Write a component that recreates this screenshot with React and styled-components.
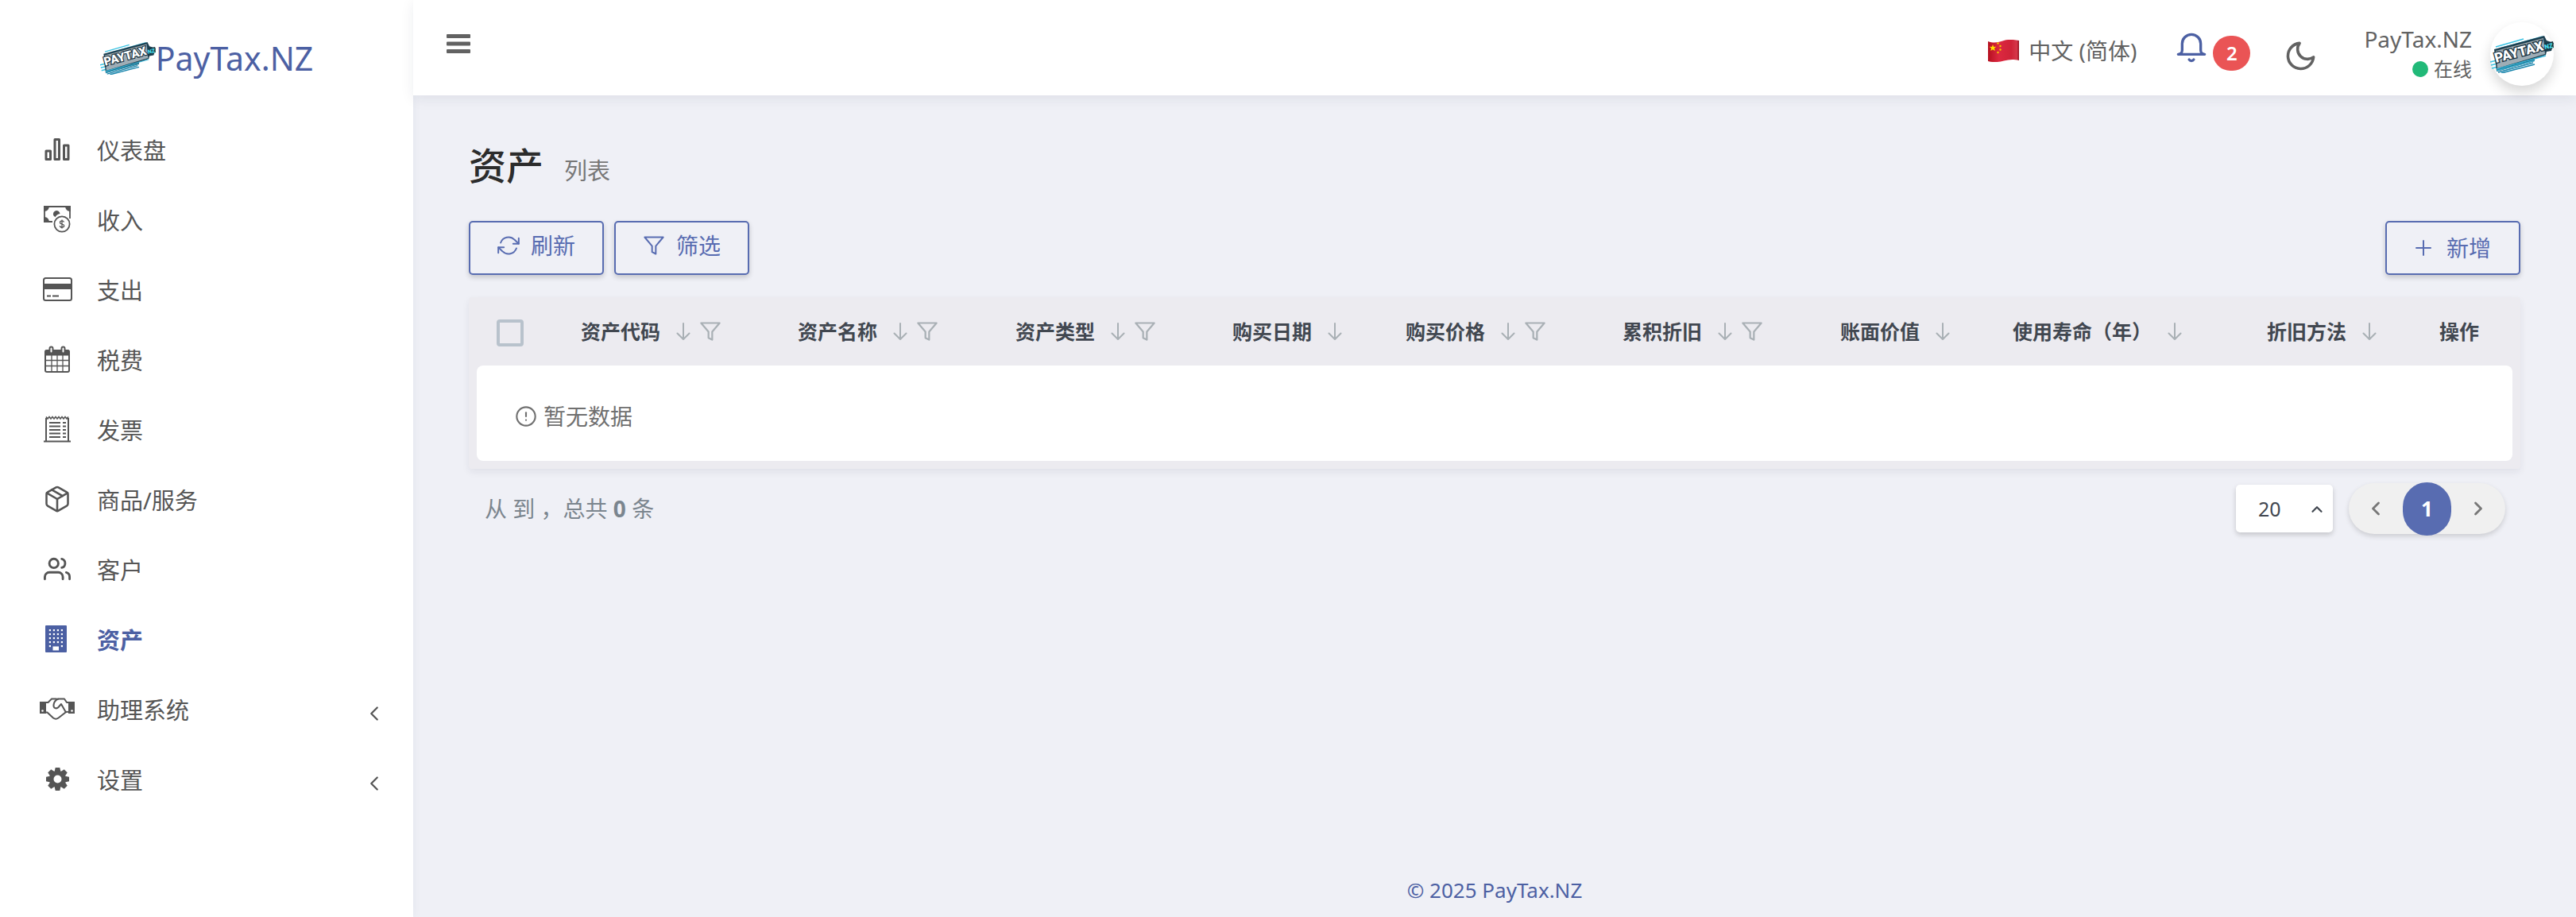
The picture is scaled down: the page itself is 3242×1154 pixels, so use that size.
import React from "react";
import styled, { createGlobalStyle, css } from "styled-components";
import {
  FiAlertCircle,
  FiChevronLeft,
  FiChevronRight,
  FiChevronUp,
  FiFilter,
  FiMoon,
  FiPackage,
  FiRefreshCw,
  FiUsers,
} from "react-icons/fi";

const color = {
  primary: "#586cb1",
  primaryDark: "#4c60a3",
  text: "#555",
  bg: "#eff0f6",
  danger: "#ea5455",
  success: "#21b978",
};

const GlobalStyle = createGlobalStyle`
  *, *::before, *::after { box-sizing: border-box; }
  body {
    margin: 0;
    background: ${color.bg};
    color: ${color.text};
    font-family: "Noto Sans", "Noto Sans CJK SC", sans-serif;
    font-size: 28px;
    line-height: 40px;
  }
  button, select, input { font: inherit; color: inherit; margin: 0; }
  a { color: inherit; text-decoration: none; }
  svg { display: block; flex: none; }
`;

const Shell = styled.div`
  display: grid;
  grid-template-columns: 520px minmax(0, 1fr);
  min-height: 100vh;
`;

/* ---------- sidebar ---------- */

const Sidebar = styled.aside`
  background: #fff;
  box-shadow: 0 0 12px rgba(40, 50, 90, 0.06);
`;

const Brand = styled.a`
  display: flex;
  align-items: center;
  justify-content: center;
  height: 146px;
  color: ${color.primaryDark};
  font-size: 41px;
  line-height: 56px;
`;

const Menu = styled.ul`
  list-style: none;
  margin: 0;
  padding: 0;
`;

const MenuLink = styled.a`
  display: flex;
  align-items: center;
  gap: 28px;
  height: 88px;
  padding: 0 34px 0 50px;
  font-size: 29px;
  ${(p) =>
    p.$active &&
    css`
      color: ${color.primaryDark};
      font-weight: 700;
    `}
`;

const IconSlot = styled.span`
  display: flex;
  justify-content: center;
  width: 44px;
  padding-bottom: 4px;
`;

const MenuText = styled.span`
  flex: 1;
`;

const MenuArrow = styled.span`
  padding-top: 8px;
`;

/* ---------- top bar ---------- */

const Main = styled.div`
  display: flex;
  flex-direction: column;
  min-width: 0;
`;

const TopBar = styled.header`
  display: flex;
  align-items: center;
  justify-content: space-between;
  height: 120px;
  padding: 0 28px 0 42px;
  background: #fff;
  color: #626262;
  box-shadow: 0 4px 16px rgba(30, 35, 60, 0.08);
`;

const PlainButton = styled.button`
  display: flex;
  align-items: center;
  gap: ${(p) => p.$gap || 0}px;
  padding: 0;
  border: 0;
  background: none;
  cursor: pointer;
`;

const ToggleButton = styled(PlainButton)`
  align-self: flex-start;
  padding-top: 43px;
`;

const TopActions = styled.div`
  display: flex;
  align-items: center;
`;

const LangButton = styled(PlainButton)`
  margin: 8px 49px 0 0;
`;

const BellButton = styled(PlainButton)`
  margin-right: 42px;
  color: ${color.primaryDark};
`;

const MoonButton = styled(PlainButton)`
  margin: 21px 58px 0 0;
`;

const Badge = styled.span`
  display: flex;
  align-items: center;
  justify-content: center;
  width: 47px;
  height: 44px;
  margin-top: 14px;
  border-radius: 22px;
  background: ${color.danger};
  color: #fff;
  font-size: 24px;
  font-weight: 600;
`;

const UserLink = styled.a`
  display: flex;
  align-items: center;
  gap: 23px;
  padding-top: 16px;
`;

const UserText = styled.span`
  display: flex;
  flex-direction: column;
  align-items: flex-end;
`;

const UserName = styled.span`
  line-height: 38px;
`;

const Status = styled.span`
  display: flex;
  align-items: center;
  gap: 7px;
  font-size: 24px;
  line-height: 38px;
`;

const Dot = styled.span`
  width: 20px;
  height: 20px;
  border-radius: 50%;
  background: ${color.success};
`;

const Avatar = styled.span`
  display: flex;
  align-items: center;
  justify-content: center;
  width: 80px;
  height: 80px;
  border-radius: 50%;
  background: #fff;
  box-shadow: 0 8px 16px rgba(0, 0, 0, 0.16);
`;

/* ---------- content ---------- */

const Content = styled.main`
  flex: 1;
  padding: 56px 70px 0;
`;

const Heading = styled.div`
  display: flex;
  align-items: baseline;
  gap: 26px;
  margin-bottom: 38px;
`;

const Title = styled.h1`
  margin: 0;
  color: #2c2c2c;
  font-size: 47px;
  font-weight: 500;
  line-height: 64px;
`;

const SubTitle = styled.small`
  color: #777;
  font-size: 29px;
`;

const Toolbar = styled.div`
  display: flex;
  gap: 13px;
  margin-bottom: 28px;
`;

const ToolButton = styled.button`
  display: flex;
  align-items: center;
  justify-content: center;
  gap: 14px;
  width: 170px;
  height: 68px;
  padding: 0 0 6px;
  border: 2px solid ${color.primary};
  border-radius: 5px;
  background: ${color.bg};
  color: ${color.primary};
  box-shadow: 0 3px 6px rgba(0, 0, 0, 0.18);
  cursor: pointer;
  &:last-child { margin-left: auto; padding: 0; }
`;

const Card = styled.section`
  padding: 0 10px 10px;
  border-radius: 4px;
  background: #ecebf0;
  box-shadow: 0 4px 10px rgba(30, 35, 60, 0.07);
`;

const Table = styled.table`
  width: 100%;
  table-layout: fixed;
  border-collapse: separate;
  border-spacing: 0;
`;

const Th = styled.th`
  width: ${(p) => p.$w}px;
  height: 86px;
  padding: 4px 0 0 27px;
  color: #414750;
  font-size: 25px;
  font-weight: 700;
  text-align: left;
  white-space: nowrap;
`;

const ThInner = styled.div`
  display: flex;
  align-items: center;
  padding-bottom: 4px;
`;

const HeadAction = styled(PlainButton)`
  margin-left: ${(p) => p.$space}px;
  color: #a9b0b5;
`;

const Checkbox = styled.input`
  display: block;
  appearance: none;
  width: 34px;
  height: 34px;
  margin-left: -2px;
  border: 4px solid #b8c2cc;
  border-radius: 4px;
`;

const EmptyCell = styled.td`
  height: 120px;
  padding: 8px 48px 0;
  border-radius: 8px;
  background: #fff;
  color: #707070;
`;

const EmptyText = styled.div`
  display: flex;
  align-items: center;
  gap: 8px;
`;

const TableFooter = styled.div`
  display: flex;
  align-items: center;
  gap: 20px;
  padding: 18px 19px 0 20px;
`;

const Summary = styled.div`
  flex: 1;
  color: #7b858e;
`;

const SelectWrap = styled.label`
  position: relative;
  display: block;
  color: #414750;
`;

const PageSize = styled.select`
  display: block;
  appearance: none;
  width: 122px;
  height: 60px;
  padding: 0 28px;
  border: 0;
  border-radius: 5px;
  background: #fff;
  font-size: 25px;
  box-shadow: 0 3px 6px rgba(0, 0, 0, 0.18);
`;

const SelectCaret = styled.span`
  position: absolute;
  top: 20px;
  right: 9px;
  pointer-events: none;
`;

const Pager = styled.nav`
  display: flex;
  align-items: center;
  height: 64px;
  border-radius: 32px;
  background: #f0f0f0;
  color: #777;
  box-shadow: 0 3px 6px rgba(0, 0, 0, 0.15);
`;

const PageLink = styled.a`
  display: flex;
  align-items: center;
  justify-content: center;
  width: 68px;
  height: 64px;
  ${(p) =>
    p.$current &&
    css`
      width: 61px;
      height: 67px;
      border-radius: 32px;
      background: ${color.primary};
      color: #fff;
      font-size: 26px;
      font-weight: 700;
    `}
`;

const PageFooter = styled.footer`
  padding-bottom: 14px;
  color: ${color.primaryDark};
  font-size: 26px;
  text-align: center;
`;

/* ---------- drawings ---------- */

const Logo = ({ width }) => (
  <svg width={width} viewBox="0 0 80 48" role="img" aria-label="PayTax.NZ">
    <g fill="none" stroke="#3cc3e3" strokeWidth="1.6">
      <path d="M7 15L42 5M12 17L66 2" />
      <path d="M0 34l8-2M1 38l8-2M2 42l8-2" />
      <path d="M10 47L54 35M14 48L56 37" stroke="#1b86ad" />
    </g>
    <path d="M5 18L68 1l3 6 9 3-3 10-6 1-1 4-14 5v3L8 46z" fill="#1d3f50" />
    <path d="M7 20L67 4l2 20L9 42z" fill="#9fadb5" />
    <path d="M8 43L70 26M8 45L56 32" stroke="#35b4d8" strokeWidth="1.4" />
    <g transform="rotate(-15 8 38)">
      <text
        x="8"
        y="35"
        fontFamily="Roboto, sans-serif"
        fontWeight="900"
        fontSize="17"
        fill="#fff"
        stroke="#17303d"
        strokeWidth="2.6"
        paintOrder="stroke"
      >
        PAYTAX
      </text>
    </g>
    <path d="M68 11l11-3 1 8-11 3z" fill="#14313e" />
    <g transform="rotate(-12 69 18)">
      <text x="69" y="18" fontFamily="Roboto, sans-serif" fontWeight="900" fontSize="8" fill="#4be0f2">
        NZ
      </text>
    </g>
  </svg>
);

const FlagCN = () => (
  <svg width="39" height="28" viewBox="0 0 39 28" aria-hidden="true">
    <defs>
      <linearGradient id="cloth" x1="0" x2="1">
        <stop offset="0" stopColor="#b5101f" />
        <stop offset="0.35" stopColor="#dc2840" />
        <stop offset="0.75" stopColor="#cf2338" />
        <stop offset="0.93" stopColor="#d6384a" />
        <stop offset="1" stopColor="#8e0d1b" />
      </linearGradient>
    </defs>
    <path d="M0 2c8 3 13 1 20-1s13-1 19 0v25c-8-2-13-1-19 .5S8 29 0 27z" fill="url(#cloth)" />
    <path d="M6 6l1.200 3 3.200-.2-2.500 2 1 3.200L6 12.200l-2.800 1.800.9-3.200-2.500-2 3.300.2z" fill="#ffe000" />
    <g fill="#f6c400">
      <circle cx="12.500" cy="4.500" r="1.200" />
      <circle cx="15.500" cy="8" r="1.200" />
      <circle cx="15.500" cy="12.500" r="1.200" />
      <circle cx="12.500" cy="16" r="1.200" />
    </g>
  </svg>
);

const BarsIcon = () => (
  <svg width="32" height="28" viewBox="0 0 32 28" fill="none" stroke="currentColor" strokeWidth="3" strokeLinejoin="round">
    <path d="M2 16h5.500v10.500H2zM13 1.500h5.500v25H13zM24.500 9H30v17.500h-5.500z" />
  </svg>
);

const MoneyIcon = () => (
  <svg width="34" height="34" viewBox="0 0 34 34" fill="none" stroke="currentColor" strokeWidth="1.800">
    <path d="M11 20H1V1h32v15" />
    <path d="M1 1h5a5 5 0 0 1-5 5zM33 1h-5a5 5 0 0 0 5 5zM1 20v-5a5 5 0 0 1 5 5z" fill="currentColor" />
    <path d="M12.500 12.500a4.300 4.300 0 1 1 8-2.500c-3 .5-4.800 2-6 4.300z" fill="currentColor" stroke="none" />
    <circle cx="23" cy="23" r="9.600" />
    <path d="M25.500 20.500c-.5-1.300-1.500-1.600-2.500-1.600-1.400 0-2.500.7-2.500 2 0 3 5.200 1.300 5.200 4.100 0 1.300-1.200 2.100-2.700 2.100s-2.500-.8-2.700-2M23 17.500v11" strokeWidth="1.300" />
  </svg>
);

const CardIcon = () => (
  <svg width="37" height="30" viewBox="0 0 37 30" fill="none" stroke="currentColor" strokeWidth="2">
    <rect x="1" y="1" width="35" height="28" rx="2.500" />
    <path d="M1 11.500h35" strokeWidth="7" />
    <path d="M5 23.500h5M12 23.500h8" />
  </svg>
);

const CalendarIcon = () => (
  <svg width="32" height="34" viewBox="0 0 32 34" fill="none" stroke="currentColor">
    <rect x="1" y="6" width="30" height="27" rx="2" strokeWidth="2" />
    <path d="M1 6h30v6H1z" fill="currentColor" />
    <path d="M9 12v21M16 12v21M23 12v21M1 18.500h30M1 25.500h30" strokeWidth="1.300" />
    <rect x="6.500" y="1.500" width="4" height="8" rx="2" fill="#fff" strokeWidth="2" />
    <rect x="21.500" y="1.500" width="4" height="8" rx="2" fill="#fff" strokeWidth="2" />
  </svg>
);

const ReceiptIcon = () => (
  <svg width="34" height="34" viewBox="0 0 34 34" fill="none" stroke="currentColor" strokeWidth="2">
    <path d="M0 32.500h34M3 32V3M31 32V3" />
    <path d="M3 1.500l2 2.500 2-2.500L9 4l2-2.500L13 4l2-2.500L17 4l2-2.500L21 4l2-2.500L25 4l2-2.500L29 4l2-2.500" strokeWidth="1.600" />
    <path d="M7 9h14M7 13.500h14M7 18h14M7 22.500h14M7 27h14M24 9h4M24 13.500h4M24 18h4M24 22.500h4M24 27h4" strokeWidth="2" />
  </svg>
);

const BuildingIcon = () => (
  <svg width="30" height="34" viewBox="0 0 30 34">
    <rect x="0" y="0" width="27" height="34" rx="1" fill="currentColor" />
    <g fill="#fff">
      {[5, 10, 15, 20].map((y) =>
        [5, 10, 15, 20].map((x) => <rect key={`${x}-${y}`} x={x - 0.2} y={y} width="2.200" height="2.200" />)
      )}
      <rect x="4.800" y="25" width="2.200" height="2.200" />
      <rect x="19.800" y="25" width="2.200" height="2.200" />
      <rect x="9.500" y="26.500" width="7.500" height="5" />
    </g>
  </svg>
);

const HandshakeIcon = () => (
  <svg width="44" height="28" viewBox="0 0 44 28" fill="none" stroke="currentColor" strokeWidth="2" strokeLinejoin="round">
    <path d="M0 5h8v15H0zM36 5h8v15h-8z" fill="currentColor" stroke="none" />
    <circle cx="3.500" cy="16.500" r="1.300" fill="#fff" stroke="none" />
    <circle cx="40.500" cy="16.500" r="1.300" fill="#fff" stroke="none" />
    <path d="M8 6h2.500L15 1.500h5.500L22 2l1.500-.5H31L34 6h2" />
    <path d="M8 18.500h1.500l7.500 7c2 1.500 4.500 1.500 6.500 0l9-7c1.500-1.200 2-.5 3.500-.5" />
    <path d="M23.500 1.500c-3 1-5.500 4-6 7.500-.6 4.500 3.500 5.500 6 3l3.500-4 6 10.500" />
  </svg>
);

const CogIcon = () => (
  <svg width="29" height="29" viewBox="-14.500 -14.500 29 29">
    <g fill="currentColor">
      {[0, 45, 90, 135, 180, 225, 270, 315].map((a) => (
        <path key={a} d="M-4-9l1.200-5.500h5.600L4-9z" transform={`rotate(${a})`} />
      ))}
    </g>
    <circle r="7.800" fill="none" stroke="currentColor" strokeWidth="5.600" />
  </svg>
);

const BellIcon = () => (
  <svg width="40" height="40" viewBox="0 0 24 24" fill="none" stroke="currentColor" strokeWidth="2" strokeLinecap="round" strokeLinejoin="round">
    <path d="M22 17H2a3 3 0 0 0 3-3V9a7 7 0 0 1 14 0v5a3 3 0 0 0 3 3zm-8.270 4a2 2 0 0 1-3.460 0" />
  </svg>
);

const HamburgerIcon = () => (
  <svg width="30" height="24" viewBox="0 0 30 24" fill="currentColor">
    <rect width="30" height="5" rx="1" />
    <rect y="9.500" width="30" height="5" rx="1" />
    <rect y="19" width="30" height="5" rx="1" />
  </svg>
);

const PlusIcon = () => (
  <svg width="26" height="20" viewBox="0 0 26 20" fill="none" stroke="currentColor" strokeWidth="2" strokeLinecap="round">
    <path d="M11 1v18M2 10h18" />
  </svg>
);

const SortIcon = () => (
  <svg width="18" height="22" viewBox="0 0 18 22" fill="none" stroke="currentColor" strokeWidth="2" strokeLinecap="round" strokeLinejoin="round">
    <path d="M9 1v20M1.500 13.500L9 21l7.500-7.500" />
  </svg>
);

/* ---------- data ---------- */

const menu = [
  { label: "仪表盘", icon: <BarsIcon /> },
  { label: "收入", icon: <MoneyIcon /> },
  { label: "支出", icon: <CardIcon /> },
  { label: "税费", icon: <CalendarIcon /> },
  { label: "发票", icon: <ReceiptIcon /> },
  { label: "商品/服务", icon: <FiPackage size={36} strokeWidth={1.7} /> },
  { label: "客户", icon: <FiUsers size={34} /> },
  { label: "资产", icon: <BuildingIcon />, active: true },
  { label: "助理系统", icon: <HandshakeIcon />, children: true },
  { label: "设置", icon: <CogIcon />, children: true },
];

const columns = [
  { label: "资产代码", width: 273, sort: true, filter: true },
  { label: "资产名称", width: 274, sort: true, filter: true },
  { label: "资产类型", width: 273, sort: true, filter: true },
  { label: "购买日期", width: 218, sort: true },
  { label: "购买价格", width: 273, sort: true, filter: true },
  { label: "累积折旧", width: 274, sort: true, filter: true },
  { label: "账面价值", width: 217, sort: true },
  { label: "使用寿命（年）", width: 320, sort: true },
  { label: "折旧方法", width: 217, sort: true },
  { label: "操作", width: 119 },
];

export default function App() {
  return (
    <Shell>
      <GlobalStyle />
      <Sidebar>
        <Brand href="#">
          <Logo width={70} />
          PayTax.NZ
        </Brand>
        <Menu>
          {menu.map((m) => (
            <li key={m.label}>
              <MenuLink href="#" $active={m.active} aria-current={m.active ? "page" : undefined}>
                <IconSlot>{m.icon}</IconSlot>
                <MenuText>{m.label}</MenuText>
                {m.children && (
                  <MenuArrow>
                    <FiChevronLeft size={30} strokeWidth={1.8} />
                  </MenuArrow>
                )}
              </MenuLink>
            </li>
          ))}
        </Menu>
      </Sidebar>

      <Main>
        <TopBar>
          <ToggleButton aria-label="菜单">
            <HamburgerIcon />
          </ToggleButton>
          <TopActions>
            <LangButton $gap={12}>
              <FlagCN />
              中文 (简体)
            </LangButton>
            <BellButton $gap={7} aria-label="通知">
              <BellIcon />
              <Badge>2</Badge>
            </BellButton>
            <MoonButton aria-label="深色模式">
              <FiMoon size={43} />
            </MoonButton>
            <UserLink href="#">
              <UserText>
                <UserName>PayTax.NZ</UserName>
                <Status>
                  <Dot />
                  在线
                </Status>
              </UserText>
              <Avatar>
                <Logo width={80} />
              </Avatar>
            </UserLink>
          </TopActions>
        </TopBar>

        <Content>
          <Heading>
            <Title>资产</Title>
            <SubTitle>列表</SubTitle>
          </Heading>

          <Toolbar>
            <ToolButton>
              <FiRefreshCw size={28} strokeWidth={1.7} />
              刷新
            </ToolButton>
            <ToolButton>
              <FiFilter size={28} strokeWidth={1.7} />
              筛选
            </ToolButton>
            <ToolButton>
              <PlusIcon />
              新增
            </ToolButton>
          </Toolbar>

          <Card>
            <Table>
              <thead>
                <tr>
                  <Th $w={104}>
                    <Checkbox type="checkbox" aria-label="全选" />
                  </Th>
                  {columns.map((c) => (
                    <Th key={c.label} $w={c.width} scope="col">
                      <ThInner>
                        {c.label}
                        {c.sort && (
                          <HeadAction $space={20} aria-label="排序">
                            <SortIcon />
                          </HeadAction>
                        )}
                        {c.filter && (
                          <HeadAction $space={11} aria-label="筛选">
                            <FiFilter size={28} strokeWidth={1.9} />
                          </HeadAction>
                        )}
                      </ThInner>
                    </Th>
                  ))}
                </tr>
              </thead>
              <tbody>
                <tr>
                  <EmptyCell colSpan={columns.length + 1}>
                    <EmptyText>
                      <FiAlertCircle size={28} strokeWidth={1.8} />
                      暂无数据
                    </EmptyText>
                  </EmptyCell>
                </tr>
              </tbody>
            </Table>
          </Card>

          <TableFooter>
            <Summary>
              从 到 ，总共 <b>0</b> 条
            </Summary>
            <SelectWrap>
              <PageSize defaultValue="20" aria-label="每页条数">
                <option>10</option>
                <option>20</option>
                <option>50</option>
              </PageSize>
              <SelectCaret>
                <FiChevronUp size={22} strokeWidth={2.4} />
              </SelectCaret>
            </SelectWrap>
            <Pager aria-label="分页">
              <PageLink href="#" aria-label="上一页">
                <FiChevronLeft size={28} strokeWidth={2.4} />
              </PageLink>
              <PageLink href="#" $current aria-current="page">
                1
              </PageLink>
              <PageLink href="#" aria-label="下一页">
                <FiChevronRight size={28} strokeWidth={2.4} />
              </PageLink>
            </Pager>
          </TableFooter>
        </Content>

        <PageFooter>
          <a href="#">© 2025 PayTax.NZ</a>
        </PageFooter>
      </Main>
    </Shell>
  );
}
